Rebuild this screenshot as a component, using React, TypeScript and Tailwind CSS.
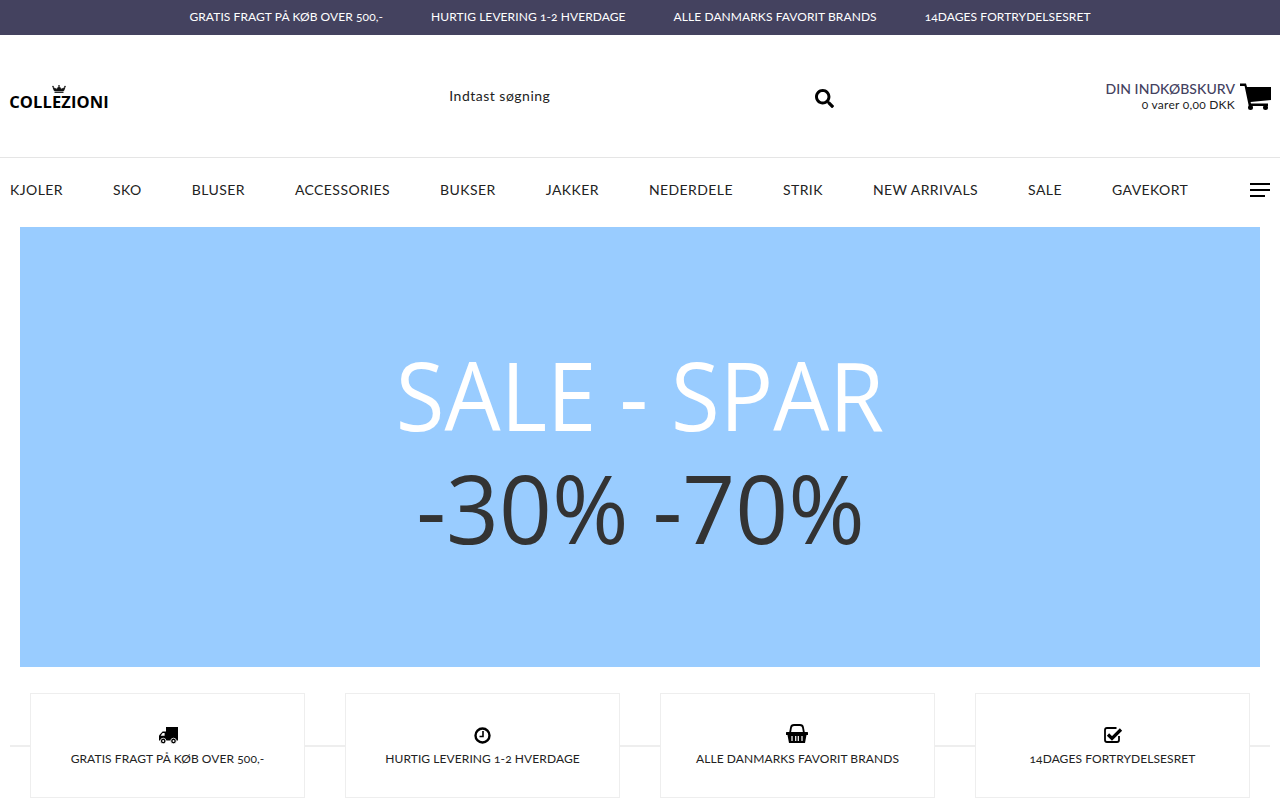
import { FaSearch } from "react-icons/fa";

const perks = ["GRATIS FRAGT PÅ KØB OVER 500,-", "HURTIG LEVERING 1-2 HVERDAGE", "ALLE DANMARKS FAVORIT BRANDS", "14DAGES FORTRYDELSESRET"];
const navItems = ["KJOLER", "SKO", "BLUSER", "ACCESSORIES", "BUKSER", "JAKKER", "NEDERDELE", "STRIK", "NEW ARRIVALS", "SALE", "GAVEKORT"];

function Crown() {
  return (
    <svg width="14" height="8" viewBox="0 0 14 8" fill="none" stroke="#111" strokeWidth="0.9">
      <path d="M2.5 6 L1 2.5 L4.5 4.2 L7 1.5 L9.5 4.2 L13 2.5 L11.5 6 Z" fill="#111" />
      <path d="M2.5 7.5 H11.5" />
      <circle cx="1" cy="1.5" r="0.8" fill="#111" stroke="none" />
      <circle cx="7" cy="0.8" r="0.8" fill="#111" stroke="none" />
      <circle cx="13" cy="1.5" r="0.8" fill="#111" stroke="none" />
    </svg>
  );
}

function CartIcon() {
  return (
    <svg width="31" height="27" viewBox="0 0 31 27" fill="#000" className="mr-[-1px]">
      <path d="M0 0.5 H6 L7 4 H31 V17 L10.6 19 L11 20.5 H28 V23 H8.8 L4.6 3 H0 Z" />
      <circle cx="10.5" cy="24.5" r="2.5" />
      <circle cx="25.5" cy="24.5" r="2.5" />
    </svg>
  );
}

function TruckIcon() {
  return (
    <svg width="19" height="17" viewBox="0 0 19 17" fill="#000" className="ml-[2px]">
      <path d="M7 0 H19 V13.5 H7 Z" />
      <path d="M7 4.5 H3.6 L0 8.5 V13.5 H7 Z" />
      <path d="M3.6 6 H5.6 V8.8 H1.6 Z" fill="#fff" />
      <circle cx="4.2" cy="14" r="2.8" stroke="#fff" strokeWidth="0.8" />
      <circle cx="4.2" cy="14" r="1" fill="#fff" />
      <circle cx="14.5" cy="14" r="2.8" stroke="#fff" strokeWidth="0.8" />
      <circle cx="14.5" cy="14" r="1" fill="#fff" />
    </svg>
  );
}

function ClockIcon() {
  return (
    <svg width="17" height="17" viewBox="0 0 17 17" fill="none" stroke="#000">
      <circle cx="8.5" cy="8.5" r="7" strokeWidth="2.4" />
      <path d="M9 4 V9.5 H5.5" strokeWidth="1.6" />
    </svg>
  );
}

function BasketIcon() {
  return (
    <svg width="22" height="19" viewBox="0 0 22 19" fill="#000" className="mb-[3px] mr-[2px]">
      <path d="M4 9 L5 3.5 Q5.4 1 8 1 H14 Q16.6 1 17 3.5 L18 9" fill="none" stroke="#000" strokeWidth="1.8" />
      <rect x="0" y="8" width="22" height="3" rx="0.5" />
      <path d="M1.5 11 H20.5 L19 19 H3 Z" />
      <path d="M6 12 V17 M9.7 12 V17 M12.3 12 V17 M16 12 V17" stroke="#fff" strokeWidth="1.2" />
    </svg>
  );
}

function CheckIcon() {
  return (
    <svg width="19" height="16" viewBox="0 0 19 16" fill="none" className="ml-[2px]">
      <path d="M12.5 1 H3 Q1 1 1 3 V13 Q1 15 3 15 H13 Q15 15 15 13 V9" stroke="#000" strokeWidth="1.8" />
      <path d="M4 7.5 L8 11.5 L17 2.5" stroke="#000" strokeWidth="3.2" />
    </svg>
  );
}

function Feature({ label, icon }: { label: string; icon: React.ReactNode }) {
  return (
    <div className="flex h-[105px] w-[275px] shrink-0 flex-col items-center border border-[#eeeeee] pt-[29px]">
      <div className="flex h-[24px] items-center justify-center">{icon}</div>
      <div className="mt-[3px] text-[12px] leading-[18px] tracking-[0.08px] text-[#222222] oldstyle-nums">{label}</div>
    </div>
  );
}

export default function App() {
  return (
    <div className="h-[800px] overflow-hidden bg-white font-['Lato','Liberation_Sans',sans-serif]">
      {/* Top bar */}
      <div className="flex h-[35px] items-center justify-center gap-[48px] bg-[#44425f] pb-[2px] text-[12px] tracking-[0.08px] text-white oldstyle-nums">
        {perks.map((p) => (
          <span key={p}>{p}</span>
        ))}
      </div>

      {/* Header */}
      <header className="flex h-[123px] items-center justify-between border-b border-[#e5e5e5] px-[10px]">
        <div className="flex w-[98px] flex-col items-center gap-[2px] pt-[1px]">
          <Crown />
          <span className="text-[16.5px] leading-[14px] font-bold tracking-[0.1px] whitespace-nowrap text-black font-['Open_Sans',sans-serif]">COLLEZIONI</span>
        </div>
        <div className="ml-[70px] flex w-[385px] items-center justify-between">
          <span className="mb-[1px] text-[14px] tracking-[0.5px] text-[#222222]">Indtast søgning</span>
          <FaSearch size={19} className="mt-[4px] text-black" />
        </div>
        <div className="flex items-center gap-[5px]">
          <div className="text-right">
            <div className="text-[14px] leading-[16px] font-medium tracking-[0.05px] text-[#44425f]">DIN INDKØBSKURV</div>
            <div className="text-[12px] leading-[15px] tracking-[0.25px] text-[#222222] oldstyle-nums">0 varer 0,00 DKK</div>
          </div>
          <CartIcon />
        </div>
      </header>

      {/* Nav */}
      <nav className="flex h-[69px] items-center justify-between px-[10px] pb-[6px]">
        <div className="flex gap-[50px] text-[14px] tracking-[0.42px] text-[#222222]">
          {navItems.map((n) => (
            <span key={n}>{n}</span>
          ))}
        </div>
        <div className="flex w-[20px] flex-col gap-[4px]">
          <div className="h-[2px] w-[20px] bg-black" />
          <div className="h-[2px] w-[20px] bg-black" />
          <div className="h-[2px] w-[15px] bg-black" />
        </div>
      </nav>

      {/* Banner */}
      <div className="mx-[20px] flex h-[440px] flex-col items-center justify-center bg-[#99ccff] pt-[6px] font-['Open_Sans',sans-serif] text-[96px] leading-[113px]">
        <div className="scale-x-[0.925] text-white">SALE - SPAR</div>
        <div className="scale-x-[0.965] text-[#333333]">-30% -70%</div>
      </div>

      {/* Features */}
      <div className="mt-[26px] flex items-center px-[10px]">
        <div className="h-[2px] w-[20px] bg-[#eeeeee]" />
        <Feature label={perks[0]} icon={<TruckIcon />} />
        <div className="h-[2px] w-[40px] bg-[#eeeeee]" />
        <Feature label={perks[1]} icon={<ClockIcon />} />
        <div className="h-[2px] w-[40px] bg-[#eeeeee]" />
        <Feature label={perks[2]} icon={<BasketIcon />} />
        <div className="h-[2px] w-[40px] bg-[#eeeeee]" />
        <Feature label={perks[3]} icon={<CheckIcon />} />
        <div className="h-[2px] w-[20px] bg-[#eeeeee]" />
      </div>
    </div>
  );
}
